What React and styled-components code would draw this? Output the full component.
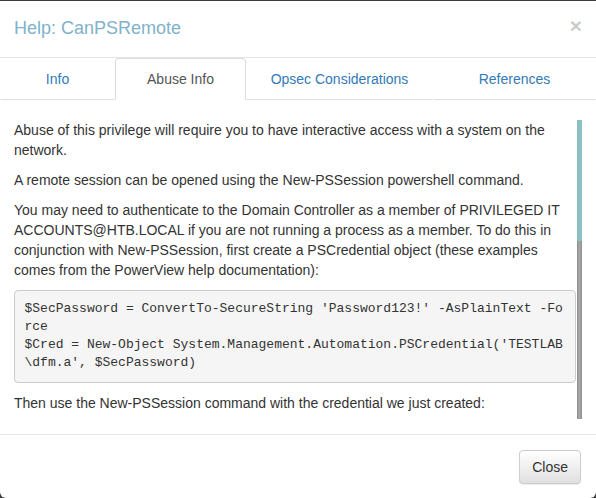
import React from "react";
import styled, { createGlobalStyle } from "styled-components";

const Global = createGlobalStyle`
  html, body {
    margin: 0;
    padding: 0;
    background: #3d3d3d;
  }
  * {
    box-sizing: border-box;
  }
`;

const Modal = styled.div`
  margin-top: 1px;
  width: 596px;
  height: 497px;
  background: #ffffff;
  border-radius: 0 0 6px 6px;
  display: flex;
  flex-direction: column;
  font-family: "Liberation Sans", Arial, sans-serif;
  font-size: 14px;
  line-height: 1.42857143;
  color: #333333;
  overflow: hidden;
`;

const Header = styled.div`
  display: flex;
  justify-content: space-between;
  align-items: flex-start;
  padding: 15px 14px;
  border-bottom: 1px solid #e5e5e5;
`;

const Title = styled.h4`
  margin: 0;
  font-size: 18px;
  font-weight: 500;
  line-height: 1.42857143;
  color: #80b2ca;
`;

const CloseX = styled.button`
  background: none;
  border: none;
  padding: 0;
  margin-top: -1px;
  font-family: "Liberation Sans", Arial, sans-serif;
  font-size: 21px;
  font-weight: bold;
  line-height: 1;
  color: #000000;
  opacity: 0.2;
  cursor: pointer;
`;

const Tabs = styled.ul`
  display: flex;
  margin: 0;
  padding: 0;
  list-style: none;
  border-bottom: 1px solid #dddddd;
`;

const Tab = styled.li`
  flex: 0 0 ${(p) => p.$w}px;
  margin-bottom: -1px;
`;

const TabLink = styled.a`
  display: block;
  padding: 10px 15px;
  text-align: center;
  line-height: 20px;
  border: 1px solid transparent;
  border-radius: 4px 4px 0 0;
  text-decoration: none;
  color: ${(p) => (p.$active ? "#555555" : "#337ab7")};
  background: #ffffff;
  ${(p) =>
    p.$active
      ? "border-color: #dddddd; border-bottom-color: transparent;"
      : "border-bottom-color: #dddddd;"}
`;

const Body = styled.div`
  display: flex;
  gap: 1px;
  padding: 20px 14px 15px 14px;
`;

const Content = styled.div`
  flex: 1;
  height: 299px;
  overflow: hidden;
`;

const ScrollTrack = styled.div`
  flex: 0 0 5px;
  height: 299px;
  background: linear-gradient(to right, #8c8c8c, #a9a9a9 50%, #8c8c8c);
`;

const Thumb = styled.div`
  height: 121px;
  background: #8dbfc3;
`;

const P = styled.p`
  margin: 0 0 10px;
`;

const Pre = styled.pre`
  margin: 0 0 10px;
  padding: 9.5px;
  font-family: "Liberation Mono", "Courier New", monospace;
  font-size: 13px;
  line-height: 18px;
  color: #333333;
  background: #f5f5f5;
  border: 1px solid #cccccc;
  border-radius: 4px;
  white-space: pre-wrap;
  word-break: break-all;
`;

const Footer = styled.div`
  display: flex;
  justify-content: flex-end;
  padding: 15px;
  border-top: 1px solid #e5e5e5;
`;

const Button = styled.button`
  padding: 6px 12px;
  font-family: "Liberation Sans", Arial, sans-serif;
  font-size: 14px;
  line-height: 20px;
  color: #333333;
  background-image: linear-gradient(to bottom, #ffffff 0, #e0e0e0 100%);
  border: 1px solid #cccccc;
  border-radius: 4px;
  box-shadow: inset 0 1px 0 rgba(255, 255, 255, 0.15),
    0 1px 1px rgba(0, 0, 0, 0.075);
  cursor: pointer;
`;

const tabs = [
  { label: "Info", w: 115 },
  { label: "Abuse Info", w: 131, active: true },
  { label: "Opsec Considerations", w: 187 },
  { label: "References", w: 163 },
];

export default function App() {
  return (
    <>
      <Global />
      <Modal>
        <Header>
          <Title>Help: CanPSRemote</Title>
          <CloseX>×</CloseX>
        </Header>
        <Tabs>
          {tabs.map((t) => (
            <Tab key={t.label} $w={t.w}>
              <TabLink href="#" $active={t.active}>
                {t.label}
              </TabLink>
            </Tab>
          ))}
        </Tabs>
        <Body>
          <Content>
            <P>
              Abuse of this privilege will require you to have interactive
              access with a system on the network.
            </P>
            <P>
              A remote session can be opened using the New-PSSession powershell
              command.
            </P>
            <P>
              You may need to authenticate to the Domain Controller as a member
              of PRIVILEGED IT ACCOUNTS@HTB.LOCAL if you are not running a
              process as a member. To do this in conjunction with New-PSSession,
              first create a PSCredential object (these examples comes from the
              PowerView help documentation):
            </P>
            <Pre>
              {"$SecPassword = ConvertTo-SecureString 'Password123!' -AsPlainText -Force\n$Cred = New-Object System.Management.Automation.PSCredential('TESTLAB\\dfm.a', $SecPassword)"}
            </Pre>
            <P>Then use the New-PSSession command with the credential we just created:</P>
          </Content>
          <ScrollTrack>
            <Thumb />
          </ScrollTrack>
        </Body>
        <Footer>
          <Button>Close</Button>
        </Footer>
      </Modal>
    </>
  );
}
